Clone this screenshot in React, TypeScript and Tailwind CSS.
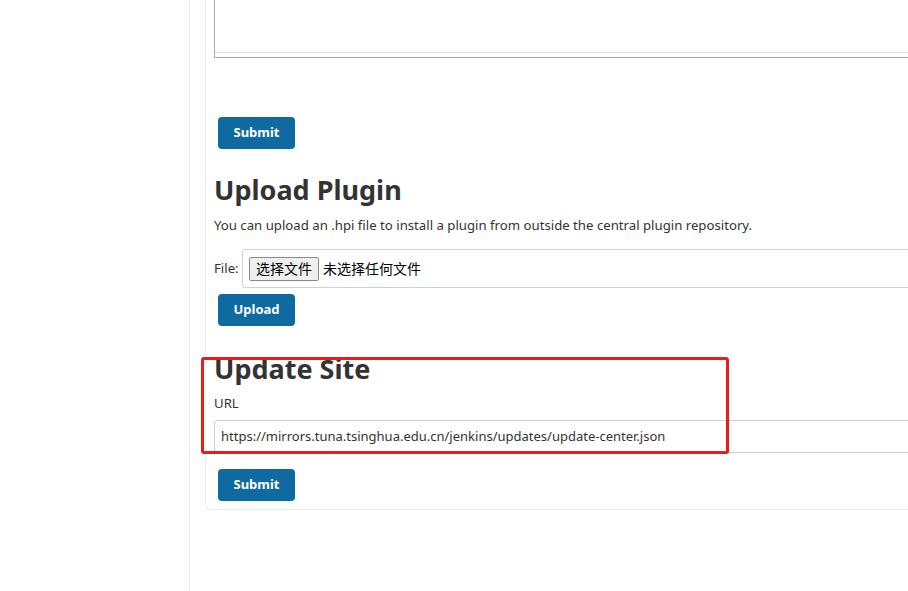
export default function App() {
  const font = { fontFamily: '"Noto Sans", "Noto Sans CJK SC", sans-serif' };
  return (
    <div className="w-[908px] h-[591px] bg-white overflow-hidden flex text-[#333]" style={font}>
      <div className="w-[190px] shrink-0 border-r border-[#ececec]" />
      <div className="flex-1 pl-[15px] overflow-hidden">
        <div className="w-[760px] border-l border-b border-[#ececec] rounded-bl-[6px] pl-[8px] pb-[8px]">
          <div className="h-[58px] border-l border-b border-[#a8a8a8]">
            <div className="h-[53px] border-b border-[#dcdcdc]" />
          </div>
          <div className="h-[59px]" />
          <button className="ml-[4px] w-[77px] h-[32px] rounded-[4px] bg-[#106aa2] text-white text-[13px] font-bold">Submit</button>
          <h2 className="mt-[24px] text-[27px] leading-[34px] font-bold text-[#333]">Upload Plugin</h2>
          <p className="mt-[8px] text-[13.2px] leading-[20px]">You can upload an .hpi file to install a plugin from outside the central plugin repository.</p>
          <div className="mt-[14px] flex items-center h-[39px]">
            <span className="text-[13.2px] w-[28px]">File:</span>
            <div className="flex-1 h-[39px] border border-[#d0d0d0] rounded-[3px] flex items-center pl-[6px]">
              <span className="h-[24px] px-[6px] flex items-center border border-[#8a8a8a] rounded-[2px] bg-[#efefef] text-[14px] text-black" style={{ fontFamily: '"Noto Sans CJK SC", sans-serif' }}>选择文件</span>
              <span className="ml-[4px] text-[14px] text-black" style={{ fontFamily: '"Noto Sans CJK SC", sans-serif' }}>未选择任何文件</span>
            </div>
          </div>
          <button className="mt-[6px] ml-[4px] w-[77px] h-[32px] rounded-[4px] bg-[#106aa2] text-white text-[13px] font-bold">Upload</button>
          <div className="relative mt-[26px]">
            <div className="absolute left-[-13px] top-[5px] w-[528px] h-[97px] border-[3px] border-[#e0201a] rounded-[3px] pointer-events-none z-10" />
            <h2 className="text-[27px] leading-[34px] font-bold text-[#333]">Update Site</h2>
            <div className="mt-[7px] text-[13.2px] leading-[20px]">URL</div>
            <div className="mt-[7px] h-[33px] border border-[#cfcfcf] rounded-[3px] flex items-center pl-[6px] text-[13px]">https://mirrors.tuna.tsinghua.edu.cn/jenkins/updates/update-center.json</div>
          </div>
          <button className="mt-[16px] ml-[4px] w-[77px] h-[32px] rounded-[4px] bg-[#106aa2] text-white text-[13px] font-bold">Submit</button>
        </div>
      </div>
    </div>
  );
}
